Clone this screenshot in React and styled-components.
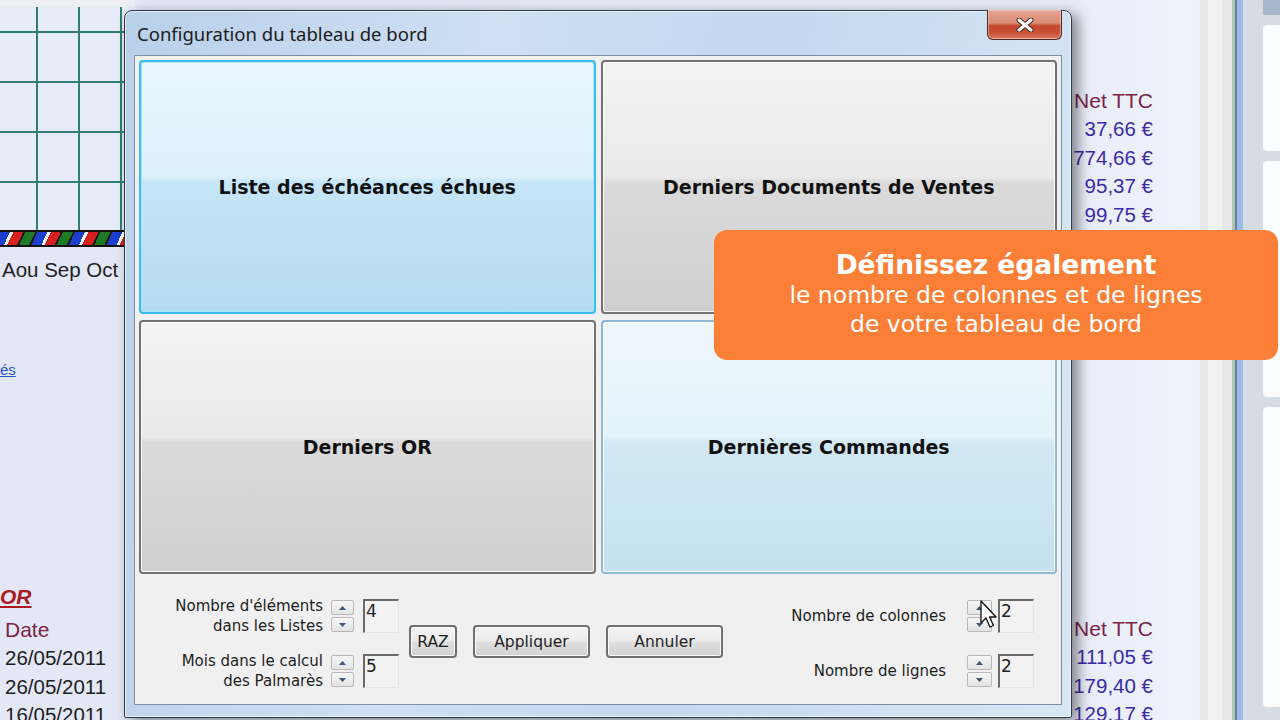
import styled, { createGlobalStyle } from 'styled-components';

const GlobalStyle = createGlobalStyle`
  html, body {
    margin: 0;
    padding: 0;
    width: 1280px;
    height: 720px;
    overflow: hidden;
    font-family: "Liberation Sans", Arial, sans-serif;
  }
`;

const Desktop = styled.div`
  position: relative;
  width: 1280px;
  height: 720px;
  overflow: hidden;
  display: flex;
  background: linear-gradient(to right, #e4e8f6 0%, #e6eaf7 80%, #eef2fb 92%, #e9edf8 100%);
`;

const MainArea = styled.div`
  width: 1200px;
  display: flex;
  justify-content: space-between;
`;

const LeftCol = styled.div`
  width: 135px;
  display: flex;
  flex-direction: column;
  & > * { flex-shrink: 0; }
`;

const Chart = styled.div`
  height: 230px;
  width: 135px;
  background-color: #e8ecf8;
  background-image:
    linear-gradient(to right, #2f7d73 2px, transparent 2px),
    linear-gradient(to bottom, #2f7d73 2px, transparent 2px);
  background-size: 42px 50px;
  background-position: 36px 24px;
  border-top: 7px solid #eef0f6;
  box-sizing: border-box;
`;

const StripeBar = styled.div`
  height: 17px;
  border-top: 2px solid #111;
  border-bottom: 2px solid #111;
  box-sizing: border-box;
  background: repeating-linear-gradient(
    115deg,
    #1d3fd0 0 9px,
    #ffffff 9px 12px,
    #d8201e 12px 21px,
    #1a1a1a 21px 23px,
    #1f7a25 23px 32px,
    #1a1a1a 32px 34px
  );
`;

const Months = styled.div`
  margin-top: 11px;
  padding-left: 2px;
  font-size: 20.5px;
  line-height: 24px;
  color: #222;
  white-space: nowrap;
`;

const SmallLink = styled.a`
  margin-top: 78px;
  font-size: 15px;
  line-height: 20px;
  color: #2b55c8;
  text-decoration: underline;
`;

const SectionTitle = styled.div`
  margin-top: 204px;
  font-size: 21px;
  line-height: 26px;
  font-weight: bold;
  font-style: italic;
  color: #a91c1f;
  text-decoration: underline;
`;

const HeadCell = styled.div`
  margin-top: ${p => p.$top || 0}px;
  padding-left: ${p => p.$pad || 0}px;
  font-size: 21px;
  line-height: 29px;
  color: #7b2447;
  white-space: nowrap;
`;

const Cell = styled.div`
  padding-left: ${p => p.$pad || 0}px;
  font-size: 20.5px;
  line-height: 28.5px;
  color: ${p => p.$blue ? '#3c2ba6' : '#1e1e1e'};
  white-space: nowrap;
`;

const RightCol = styled.div`
  width: 130px;
  padding-right: 47px;
  padding-top: 86px;
  text-align: right;
  display: flex;
  flex-direction: column;
  & > * { flex-shrink: 0; }
`;

const ScrollBand = styled.div`
  width: 43px;
  background: linear-gradient(to right, #e9e9e9 0 8px, #f2f2f2 8px 22px, #e8e8e8 22px 32px, #b8c6a8 32px 35px, #5d7fb8 35px 37px, #9dbbe6 37px 43px);
`;

const SidePane = styled.div`
  flex: 1;
  background: #d6dbe4;
  display: flex;
  flex-direction: column;
  gap: 10px;
  padding-left: 20px;
`;

const SideHeader = styled.div`
  height: 15px;
  background: #a9b5ca;
`;

const SideCard = styled.div`
  height: ${p => p.$h}px;
  flex-shrink: 0;
  background: #fbfcfe;
  border-radius: 4px 0 0 4px;
`;

/* ---------- dialog ---------- */

const Window = styled.div`
  position: absolute;
  left: 124px;
  top: 10px;
  width: 948px;
  height: 708px;
  box-sizing: border-box;
  border: 1px solid #2c3a4c;
  border-radius: 8px 8px 2px 2px;
  background: linear-gradient(100deg, #b9d0ea 0%, #cfe0f3 35%, #c4d8ee 60%, #d9e7f5 100%);
  box-shadow: 6px 4px 14px rgba(0, 0, 0, 0.45), inset 0 0 0 1px rgba(255,255,255,0.6);
  display: flex;
  flex-direction: column;
`;

const TitleBar = styled.div`
  position: relative;
  height: 44px;
  display: flex;
  align-items: center;
  padding-left: 12px;
  padding-top: 1px;
  box-sizing: border-box;
`;

const Title = styled.span`
  font-family: "Noto Sans", "Open Sans", sans-serif;
  font-size: 18.5px;
  color: #1b1b1b;
`;

const CloseBtn = styled.div`
  position: absolute;
  top: -1px;
  right: 9px;
  width: 75px;
  height: 30px;
  box-sizing: border-box;
  border: 1px solid #4a2a24;
  border-top: none;
  border-radius: 0 0 6px 6px;
  background: linear-gradient(to bottom, #e6a796 0%, #d88a74 45%, #c5452a 55%, #c6543a 80%, #dc7b5e 100%);
  box-shadow: inset 0 0 0 1px rgba(255, 220, 210, 0.5);
  display: flex;
  align-items: center;
  justify-content: center;
`;

const Client = styled.div`
  flex: 1;
  margin: 0 9px 12px 9px;
  border: 1px solid #7d8fa6;
  background: #f0f0f0;
  padding: 4px;
  display: flex;
  flex-direction: column;
`;

const TileGrid = styled.div`
  height: 514px;
  display: grid;
  grid-template-columns: 1fr 1fr;
  grid-template-rows: 1fr 1fr;
  gap: 6px 5px;
`;

const tileBg = {
  gray: 'linear-gradient(to bottom, #f3f3f3 0%, #eaeaea 46%, #dbdbdb 48%, #cfcfcf 100%)',
  selected: 'linear-gradient(to bottom, #eaf6fd 0%, #dcf0fb 46%, #c6e6f7 48%, #b4dbf2 100%)',
  hover: 'linear-gradient(to bottom, #eef7fc 0%, #e4f2fa 46%, #d2e8f4 48%, #c5e1f0 100%)',
};

const Tile = styled.div`
  box-sizing: border-box;
  border-radius: 4px;
  border: 2px solid ${p => p.$kind === 'selected' ? '#3cbdee' : p.$kind === 'hover' ? '#8fb9d4' : '#727272'};
  box-shadow: inset 0 0 0 1px ${p => p.$kind === 'selected' ? '#a9e6fb' : '#fafafa'};
  background: ${p => tileBg[p.$kind]};
  display: flex;
  align-items: center;
  justify-content: center;
  font-family: "DejaVu Sans", Verdana, sans-serif;
  font-weight: bold;
  font-size: 19px;
  color: #111;
`;

const BottomPanel = styled.div`
  flex: 1;
  display: flex;
  align-items: flex-start;
  padding: 25px 23px 0 34px;
  font-family: "DejaVu Sans", Verdana, sans-serif;
  font-size: 15px;
  color: #1e1e1e;
`;

const FieldGroup = styled.div`
  display: grid;
  grid-template-columns: ${p => p.$label}px auto 36px;
  grid-auto-rows: 34px;
  row-gap: 21px;
  align-items: center;
  margin-left: ${p => p.$auto ? 'auto' : '0'};
`;

const Label = styled.div`
  text-align: right;
  line-height: 20.5px;
  white-space: nowrap;
`;

const Spinner = styled.div`
  width: ${p => p.$w}px;
  margin: 0 ${p => p.$after}px 0 ${p => p.$before}px;
  display: flex;
  flex-direction: column;
  gap: 2px;
  height: 34px;
  justify-content: center;
`;

const SpinBtn = styled.div`
  height: 15px;
  box-sizing: border-box;
  border: 1px solid #b8b8b8;
  border-radius: 2px;
  background: linear-gradient(to bottom, #f7f7f7, #e3e3e3);
  display: flex;
  align-items: center;
  justify-content: center;
`;

const NumBox = styled.div`
  height: 34px;
  box-sizing: border-box;
  border-top: 2px solid #6a6a6a;
  border-left: 2px solid #6a6a6a;
  border-right: 1px solid #e4e4e4;
  border-bottom: 1px solid #e4e4e4;
  background: #f2f2f2;
  font-size: 17px;
  line-height: 20px;
  padding-left: 1px;
  color: #222;
`;

const ButtonRow = styled.div`
  display: flex;
  gap: 16px;
  margin-left: 10px;
  margin-top: 26px;
`;

const Button = styled.div`
  width: ${p => p.$w}px;
  height: 33px;
  box-sizing: border-box;
  border: 2px solid #707070;
  border-radius: 4px;
  box-shadow: inset 0 0 0 1px #fbfbfb;
  background: linear-gradient(to bottom, #f4f4f4 0%, #ebebeb 48%, #dfdfdf 52%, #d2d2d2 100%);
  display: flex;
  align-items: center;
  justify-content: center;
  font-size: 15.5px;
  color: #1e1e1e;
`;

const Callout = styled.div`
  position: absolute;
  left: 714px;
  top: 230px;
  width: 564px;
  height: 130px;
  box-sizing: border-box;
  border-radius: 13px;
  background: #fb7f37;
  display: flex;
  flex-direction: column;
  align-items: center;
  justify-content: center;
  padding-bottom: 2px;
  font-family: "DejaVu Sans", Verdana, sans-serif;
  color: #fff;
  text-align: center;
`;

const CalloutTitle = styled.div`
  font-weight: bold;
  font-size: 26.5px;
  line-height: 32px;
`;

const CalloutText = styled.div`
  font-size: 23.5px;
  line-height: 29px;
`;

const Cursor = styled.svg`
  position: absolute;
  left: 980px;
  top: 600px;
`;

const Arrow = ({ down }) => (
  <svg width="9" height="6" viewBox="0 0 9 6">
    <path d={down ? 'M1 1h7L4.5 5z' : 'M1 5h7L4.5 1z'} fill="#3f5578" />
  </svg>
);

const SpinField = ({ label, value, spin }) => (
  <>
    <Label>{label}</Label>
    <Spinner $w={spin.w} $before={spin.before} $after={spin.after}>
      <SpinBtn><Arrow /></SpinBtn>
      <SpinBtn><Arrow down /></SpinBtn>
    </Spinner>
    <NumBox>{value}</NumBox>
  </>
);

const leftSpin = { w: 23, before: 8, after: 9 };
const rightSpin = { w: 25, before: 21, after: 6 };

export default function App() {
  return (
    <>
      <GlobalStyle />
      <Desktop>
        <MainArea>
          <LeftCol>
            <Chart />
            <StripeBar />
            <Months>Aou Sep Oct</Months>
            <SmallLink>és</SmallLink>
            <SectionTitle>OR</SectionTitle>
            <HeadCell $top={5} $pad={5}>Date</HeadCell>
            <Cell $pad={5}>26/05/2011</Cell>
            <Cell $pad={5}>26/05/2011</Cell>
            <Cell $pad={5}>16/05/2011</Cell>
          </LeftCol>
          <RightCol>
            <HeadCell>Net TTC</HeadCell>
            <Cell $blue>37,66 €</Cell>
            <Cell $blue>774,66 €</Cell>
            <Cell $blue>95,37 €</Cell>
            <Cell $blue>99,75 €</Cell>
            <HeadCell $top={385}>Net TTC</HeadCell>
            <Cell $blue>111,05 €</Cell>
            <Cell $blue>179,40 €</Cell>
            <Cell $blue>129,17 €</Cell>
          </RightCol>
        </MainArea>
        <ScrollBand />
        <SidePane>
          <SideHeader />
          <SideCard $h={126} />
          <SideCard $h={236} />
          <SideCard $h={300} />
        </SidePane>

        <Window>
          <TitleBar>
            <Title>Configuration du tableau de bord</Title>
            <CloseBtn>
              <svg width="18" height="14" viewBox="0 0 18 14">
                <path d="M3 2l12 10M15 2L3 12" stroke="#4a2a24" strokeWidth="5" strokeLinecap="round" />
                <path d="M3 2l12 10M15 2L3 12" stroke="#ffffff" strokeWidth="3" strokeLinecap="round" />
              </svg>
            </CloseBtn>
          </TitleBar>
          <Client>
            <TileGrid>
              <Tile $kind="selected">Liste des échéances échues</Tile>
              <Tile $kind="gray">Derniers Documents de Ventes</Tile>
              <Tile $kind="gray">Derniers OR</Tile>
              <Tile $kind="hover">Dernières Commandes</Tile>
            </TileGrid>
            <BottomPanel>
              <FieldGroup $label={150}>
                <SpinField label={<>Nombre d'éléments<br />dans les Listes</>} value="4" spin={leftSpin} />
                <SpinField label={<>Mois dans le calcul<br />des Palmarès</>} value="5" spin={leftSpin} />
              </FieldGroup>
              <ButtonRow>
                <Button $w={48}>RAZ</Button>
                <Button $w={117}>Appliquer</Button>
                <Button $w={117}>Annuler</Button>
              </ButtonRow>
              <FieldGroup $label={180} $auto>
                <SpinField label="Nombre de colonnes" value="2" spin={rightSpin} />
                <SpinField label="Nombre de lignes" value="2" spin={rightSpin} />
              </FieldGroup>
            </BottomPanel>
          </Client>
        </Window>

        <Callout>
          <CalloutTitle>Définissez également</CalloutTitle>
          <CalloutText>le nombre de colonnes et de lignes</CalloutText>
          <CalloutText>de votre tableau de bord</CalloutText>
        </Callout>

        <Cursor width="20" height="30" viewBox="0 0 20 30">
          <path d="M1 1 L1 23 L6 18 L10 27 L13.5 25.5 L9.5 17 L16 17 Z" fill="#fff" stroke="#111" strokeWidth="1.3" strokeLinejoin="round" />
        </Cursor>
      </Desktop>
    </>
  );
}
